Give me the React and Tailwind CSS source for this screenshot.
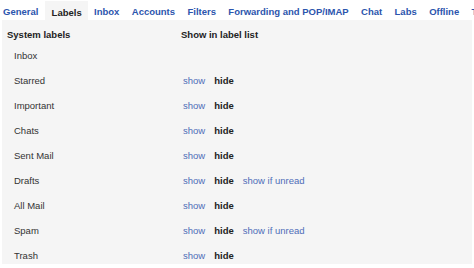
const tabs = ['General', 'Labels', 'Inbox', 'Accounts', 'Filters', 'Forwarding and POP/IMAP', 'Chat', 'Labs', 'Offline', 'Themes']

const labels = [
  { name: 'Inbox', opts: false },
  { name: 'Starred', opts: true },
  { name: 'Important', opts: true },
  { name: 'Chats', opts: true },
  { name: 'Sent Mail', opts: true },
  { name: 'Drafts', opts: true, unread: true },
  { name: 'All Mail', opts: true },
  { name: 'Spam', opts: true, unread: true },
  { name: 'Trash', opts: true },
]

export default function App() {
  return (
    <div className="w-[474px] h-[268px] overflow-hidden bg-white text-[9.5px] font-['Liberation_Sans',Arial,sans-serif]">
      <div className="flex h-[20px] whitespace-nowrap">
        {tabs.map((t, i) => (
          <div
            key={t}
            className={`h-[20px] pt-[6px] leading-[12px] font-bold ${i === 0 ? 'pl-[3px] pr-[7px]' : 'px-[6.2px]'} ${
              t === 'Labels' ? 'bg-[#f5f5f5] text-[#222] mt-[1px] h-[19px] pt-[5px]' : 'text-[#2c55ad]'
            }`}
          >
            {t}
          </div>
        ))}
      </div>
      <div className="ml-[2px] w-[470px] h-[244px] bg-[#f5f5f5] overflow-hidden">
        <div className="flex h-[23px] pt-[9px] leading-[12px] font-bold text-[#222]">
          <div className="w-[179px] pl-[5px]">System labels</div>
          <div>Show in label list</div>
        </div>
        {labels.map((l) => (
          <div key={l.name} className="flex items-center h-[25px] leading-[12px]">
            <div className="w-[181px] pl-[12px] text-[#333]">{l.name}</div>
            {l.opts && (
              <div className="flex gap-[9px]">
                <span className="text-[#4f6db8]">show</span>
                <span className="font-bold text-[#222]">hide</span>
                {l.unread && <span className="text-[#4f6db8]">show if unread</span>}
              </div>
            )}
          </div>
        ))}
      </div>
    </div>
  )
}
